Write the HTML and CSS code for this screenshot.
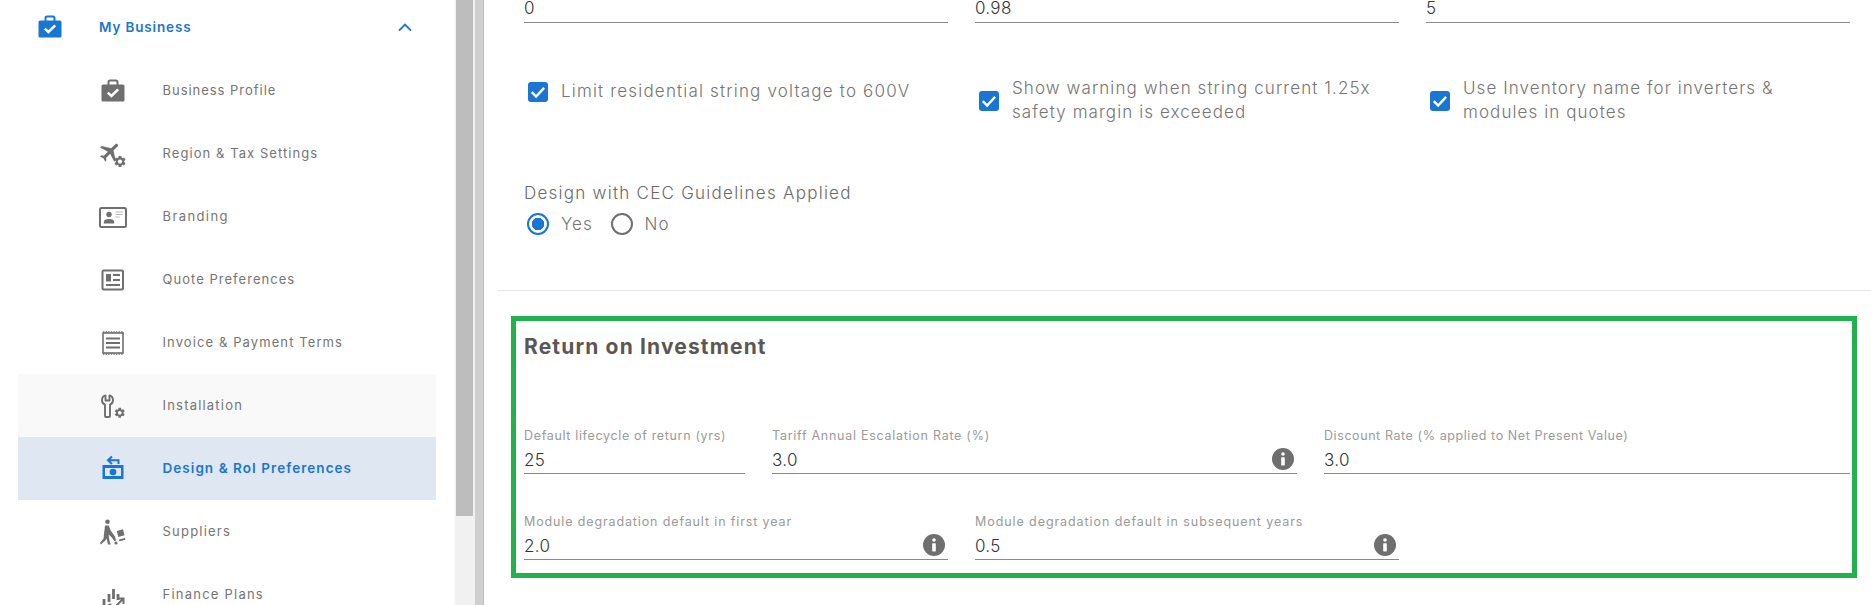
FILE: index.html
```html
<!DOCTYPE html>
<html lang="en">
<head>
<meta charset="utf-8">
<title>Design &amp; RoI Preferences</title>
<link rel="stylesheet" href="styles.css">
</head>
<body>
<svg class="defs" width="0" height="0" aria-hidden="true">
  <defs>
    <symbol id="gear" viewBox="0 0 24 24"><path d="M19.14 12.94c.04-.3.06-.61.06-.94 0-.32-.02-.64-.07-.94l2.03-1.58c.18-.14.23-.41.12-.61l-1.92-3.32c-.12-.22-.37-.29-.59-.22l-2.39.96c-.5-.38-1.03-.7-1.62-.94l-.36-2.54c-.04-.24-.24-.41-.48-.41h-3.84c-.24 0-.43.17-.47.41l-.36 2.54c-.59.24-1.13.57-1.62.94l-2.39-.96c-.22-.08-.47 0-.59.22L2.74 8.87c-.12.21-.08.47.12.61l2.03 1.58c-.05.3-.09.63-.09.94s.02.64.07.94l-2.03 1.58c-.18.14-.23.41-.12.61l1.92 3.32c.12.22.37.29.59.22l2.39-.96c.5.38 1.03.7 1.62.94l.36 2.54c.05.24.24.41.48.41h3.84c.24 0 .44-.17.47-.41l.36-2.54c.59-.24 1.13-.56 1.62-.94l2.39.96c.22.08.47 0 .59-.22l1.92-3.32c.12-.22.07-.47-.12-.61l-2.01-1.58zM12 15.6c-1.98 0-3.6-1.62-3.6-3.6s1.62-3.6 3.6-3.6 3.6 1.62 3.6 3.6-1.62 3.6-3.6 3.6z"/></symbol>
    <symbol id="case" viewBox="0 0 30 30">
      <path d="M10.500 9V6q0-1.600 1.600-1.600h5.800q1.600 0 1.600 1.600v3" fill="none" stroke="currentColor" stroke-width="2"/>
      <rect x="3.500" y="8.500" width="23" height="17" rx="1.600" fill="currentColor"/>
      <path d="M9.800 16.600l3.600 3.400 6.800-6.600" fill="none" stroke="#fff" stroke-width="2.500"/>
    </symbol>
    <symbol id="info" viewBox="0 0 22 22">
      <circle cx="11" cy="11" r="11" fill="#6f6f6f"/>
      <circle cx="11" cy="6" r="1.800" fill="#fff"/>
      <rect x="9.200" y="9.200" width="3.600" height="8.200" rx=".6" fill="#fff"/>
    </symbol>
    <symbol id="tick" viewBox="0 0 20 20">
      <rect width="20" height="20" rx="3" fill="#1976d2"/>
      <path d="M3.800 10.200l4.300 4.300 8-8.600" fill="none" stroke="#fff" stroke-width="2.400"/>
    </symbol>
  </defs>
</svg>

<aside class="sidebar">
  <nav>
    <div class="nav-head">
      <svg class="nav-head-icon" width="30" height="30"><use href="#case"/></svg>
      <span class="nav-head-text">My Business</span>
      <svg class="chevron" width="14" height="9" viewBox="0 0 14 9"><path d="M1 7.600l6-6 6 6" fill="none" stroke="#1976d2" stroke-width="2"/></svg>
    </div>

    <div class="nav-item">
      <svg class="nav-icon" width="30" height="30"><use href="#case"/></svg>
      <span class="ls-a">Business Profile</span>
    </div>

    <div class="nav-item">
      <svg class="nav-icon" width="30" height="30" viewBox="0 0 30 30">
        <g transform="translate(12.500 13) rotate(45) scale(1.050) translate(-12 -12)"><path fill="currentColor" d="M21 16v-2l-8-5V3.500c0-.83-.67-1.500-1.500-1.500S10 2.670 10 3.500V9l-8 5v2l8-2.500V19l-2 1.500V22l3.500-1 3.500 1v-1.500L13 19v-5.500l8 2.500z"/></g>
        <use href="#gear" x="15" y="15.500" width="14" height="14" fill="currentColor"/>
      </svg>
      <span class="ls-b">Region &amp; Tax Settings</span>
    </div>

    <div class="nav-item">
      <svg class="nav-icon" width="30" height="30" viewBox="0 0 30 30">
        <rect x="2" y="6" width="26" height="19" rx="1.500" fill="none" stroke="currentColor" stroke-width="2"/>
        <circle cx="11" cy="12.500" r="2.700" fill="currentColor"/>
        <path d="M5.800 21.500v-1.600q0-2.900 5.200-2.900t5.200 2.900v1.600z" fill="currentColor"/>
        <path d="M17.500 10h7M17.500 12.500h7M17.500 15h4" stroke="#b9b9b9" stroke-width="1.200"/>
      </svg>
      <span class="ls-c">Branding</span>
    </div>

    <div class="nav-item">
      <svg class="nav-icon" width="30" height="30" viewBox="0 0 30 30">
        <rect x="4.500" y="5.500" width="20.500" height="19" rx="1" fill="none" stroke="currentColor" stroke-width="2"/>
        <rect x="8" y="9" width="5" height="7.500" fill="currentColor"/>
        <path d="M15 10h7M15 15h7M8 20h14" stroke="currentColor" stroke-width="2"/>
      </svg>
      <span class="ls-d">Quote Preferences</span>
    </div>

    <div class="nav-item">
      <svg class="nav-icon" width="30" height="30" viewBox="0 0 30 30">
        <rect x="5" y="5" width="20" height="20" fill="none" stroke="currentColor" stroke-width="1.600"/>
        <path d="M5 4h20M5 26h20" stroke="currentColor" stroke-width="1.400" stroke-dasharray="1.400 1.200"/>
        <path d="M8 10.500h14M8 15h14M8 19.500h14" stroke="currentColor" stroke-width="2"/>
      </svg>
      <span class="ls-e">Invoice &amp; Payment Terms</span>
    </div>

    <div class="nav-item nav-hover">
      <svg class="nav-icon" width="30" height="30" viewBox="0 0 30 30">
        <path d="M7.500 4.400C5.400 5 4 7 4 9.200c0 2.200 1.300 3.700 3 4.500V25q0 1 1 1h3q1 0 1-1V13.700c1.700-.8 3-2.300 3-4.500 0-2.200-1.400-4.200-3.500-4.800v5.100H7.500z" fill="none" stroke="currentColor" stroke-width="1.900" stroke-linejoin="round"/>
        <use href="#gear" x="15.500" y="15.500" width="12.500" height="12.500" fill="currentColor"/>
      </svg>
      <span class="ls-f">Installation</span>
    </div>

    <div class="nav-item nav-active">
      <svg class="nav-icon" width="30" height="30" viewBox="0 0 30 30">
        <path d="M20.500 10V6.200H10M14 2.500L10 6.200l4 3.700" fill="none" stroke="currentColor" stroke-width="2"/>
        <path fill-rule="evenodd" d="M4.500 11h21v14h-21zM7 14v8h16v-8z" fill="currentColor"/>
        <ellipse cx="15" cy="18" rx="3.400" ry="3.200" fill="currentColor"/>
      </svg>
      <span class="ls-g">Design &amp; RoI Preferences</span>
    </div>

    <div class="nav-item">
      <svg class="nav-icon" width="30" height="30" viewBox="0 0 30 30">
        <circle cx="9.500" cy="4.700" r="2.300" fill="currentColor"/>
        <path d="M7 8.500h3.700l2 5 4.300 6 1 4-1.600.8-2.400-3.500-3.300-3.300.5 5.300 1.400 4.700H10l-1.500-6-1 1.700-4.700 4.300L2 26l3.500-4.500z" fill="currentColor"/>
        <circle cx="18" cy="26" r="1.600" fill="currentColor"/>
        <path d="M18.800 14l6.200-1.700 1.500 6-6.200 1.700zM21 22.600l6-1.500.4 1.700-6 1.500z" fill="currentColor"/>
      </svg>
      <span class="ls-h">Suppliers</span>
    </div>

    <div class="nav-item">
      <svg class="nav-icon" width="30" height="30" viewBox="0 0 30 30">
        <path d="M6 19v7.500M11 14v8M15.500 9v10M20 14v6" stroke="currentColor" stroke-width="2.800"/>
        <path d="M5 29l7-4.500 4 3.500 8.500-8.500M20 18.500h5.500V24" fill="none" stroke="currentColor" stroke-width="2"/>
      </svg>
      <span class="ls-i">Finance Plans</span>
    </div>
  </nav>
</aside>

<div class="scroll-a"><div class="scroll-a-thumb"></div></div>
<div class="scroll-b"></div>

<main class="main">
  <div class="grid-3 top-inputs">
    <div class="value-row"><span class="value">0</span></div>
    <div class="value-row"><span class="value">0.98</span></div>
    <div class="value-row"><span class="value">5</span></div>
  </div>

  <div class="grid-3 checks">
    <label class="check check-single">
      <svg class="tick" width="20" height="20"><use href="#tick"/></svg>
      <span>Limit residential string voltage to 600V</span>
    </label>
    <label class="check">
      <svg class="tick" width="20" height="20"><use href="#tick"/></svg>
      <span>Show warning when string current 1.25x<br>safety margin is exceeded</span>
    </label>
    <label class="check">
      <svg class="tick" width="20" height="20"><use href="#tick"/></svg>
      <span>Use Inventory name for inverters &amp;<br>modules in quotes</span>
    </label>
  </div>

  <div class="cec-label">Design with CEC Guidelines Applied</div>
  <div class="radios">
    <span class="radio radio-on"></span><span class="radio-text radio-text-yes">Yes</span>
    <span class="radio radio-off"></span><span class="radio-text">No</span>
  </div>

  <hr class="divider">

  <section class="roi">
    <h2 class="roi-title">Return on Investment</h2>
    <div class="roi-row-1">
      <div class="field">
        <div class="field-label ls-l1">Default lifecycle of return (yrs)</div>
        <div class="value-row"><span class="value">25</span></div>
      </div>
      <div class="field">
        <div class="field-label ls-l2">Tariff Annual Escalation Rate (%)</div>
        <div class="value-row"><span class="value">3.0</span><svg class="info" width="22" height="22"><use href="#info"/></svg></div>
      </div>
      <div class="field">
        <div class="field-label ls-l3">Discount Rate (% applied to Net Present Value)</div>
        <div class="value-row"><span class="value">3.0</span></div>
      </div>
    </div>
    <div class="roi-row-2">
      <div class="field">
        <div class="field-label ls-l4">Module degradation default in first year</div>
        <div class="value-row"><span class="value">2.0</span><svg class="info" width="22" height="22"><use href="#info"/></svg></div>
      </div>
      <div class="field">
        <div class="field-label ls-l5">Module degradation default in subsequent years</div>
        <div class="value-row"><span class="value">0.5</span><svg class="info" width="22" height="22"><use href="#info"/></svg></div>
      </div>
    </div>
  </section>
</main>
</body>
</html>
```

FILE: styles.css
```css
* { box-sizing: border-box; }
html, body { height: 605px; margin: 0; overflow: hidden; background: #fff; }
body {
  display: flex;
  font-family: Inter, "Noto Sans", "Liberation Sans", sans-serif;
  color: #757575;
}
.defs { position: absolute; }

/* Sidebar */
.sidebar { width: 454px; flex: none; padding-left: 18px; overflow: hidden; }
nav { width: 418px; }
.nav-head { height: 54px; margin-bottom: 5px; display: flex; align-items: center; color: #1976d2; }
.nav-head-icon { margin-left: 16.5px; flex: none; }
.nav-head-text { margin-left: 34.5px; font-size: 13.5px; font-weight: 600; letter-spacing: .85px; }
.chevron { margin-left: auto; margin-right: 24px; }
.nav-item { height: 63px; display: flex; align-items: center; font-size: 13px; color: #757575; font-weight: 400; }
.nav-item span { margin-top: -1px; }
.nav-icon { margin-left: 79.5px; flex: none; margin-right: 35px; color: #6f6f6f; }
.nav-hover { background: #f9f9f9; }
.nav-active { background: #dee7f2; color: #1976d2; font-weight: 600; font-size: 13.5px; }
.nav-active .nav-icon { color: #1976d2; }

.ls-a { letter-spacing: .97px; }
.ls-b { letter-spacing: 1.07px; }
.ls-c { letter-spacing: 1.4px; }
.ls-d { letter-spacing: 1.03px; }
.ls-e { letter-spacing: 1.1px; }
.ls-f { letter-spacing: 1.2px; }
.ls-g { letter-spacing: 1.05px; }
.ls-h { letter-spacing: 1.22px; }
.ls-i { letter-spacing: 1.23px; }

/* Scrollbars */
.scroll-a { width: 21px; flex: none; background: #f1f1f1; border-left: 2px solid #f6f6f6; padding-right: 2px; }
.scroll-a-thumb { height: 516px; background: #bdbdbd; }
.scroll-b { width: 9px; flex: none; background: #cfcfcf; border-right: 1px solid #bdbdbd; }

/* Main */
.main { flex: 1; padding: 0 21px 0 40px; min-width: 0; font-size: 17px; font-weight: 300; letter-spacing: 1.08px; }
.grid-3 { display: grid; grid-template-columns: repeat(3, 1fr); column-gap: 27px; }
.value-row { height: 25px; display: flex; align-items: center; justify-content: space-between; border-bottom: 1px solid #8a8a8a; padding-bottom: 2px; }
.value { font-size: 17px; font-weight: 300; color: #333; letter-spacing: .3px; }
.info { flex: none; margin-right: 3px; margin-top: -1px; }
.top-inputs { margin-top: -2px; }
.top-inputs .value-row { padding-bottom: 4px; }

.checks { margin-top: 54px; }
.check { display: flex; align-items: center; gap: 13px; padding-left: 4px; line-height: 23.5px; min-height: 47px; }
.check-single { min-height: 30px; align-self: start; letter-spacing: 1.18px; }
.tick { flex: none; }

.cec-label { margin-top: 58px; line-height: 23px; letter-spacing: 1.25px; color: #6a6a6a; }
.radios { display: flex; align-items: center; height: 24px; margin-top: 7px; padding-left: 3px; }
.radio { width: 22px; height: 22px; border-radius: 50%; flex: none; }
.radio-on { border: 2.2px solid #1976d2; background: radial-gradient(circle, #1976d2 0 6px, #fff 6.5px); }
.radio-off { border: 2.2px solid #6f6f6f; }
.radio-text { margin-left: 12px; }
.radio-text-yes { width: 49.5px; }

.divider { height: 1px; border: 0; background: #e6e6e6; margin: 54px -21px 0 -27px; }

/* Return on investment */
.roi { margin: 25px -7px 0 -13px; height: 262px; border: 5px solid #22b14c; padding: 14px 2px 0 8px; letter-spacing: normal; }
.roi-title { margin: 0; font-size: 21px; line-height: 24px; font-weight: 700; color: #5b5754; letter-spacing: 1.15px; }
.roi-row-1 { display: grid; grid-template-columns: 221px 525px 1fr; column-gap: 27px; margin-top: 69px; }
.roi-row-2 { display: grid; grid-template-columns: 424px 424px 1fr; column-gap: 27px; margin-top: 40px; }
.field { height: 46px; }
.field-label { font-size: 12.5px; font-weight: 400; line-height: 16px; height: 20px; color: #9a9a9a; }
.field .value-row { height: 26px; }

.ls-l1 { letter-spacing: .66px; }
.ls-l2 { letter-spacing: .73px; }
.ls-l3 { letter-spacing: .58px; }
.ls-l4 { letter-spacing: .87px; }
.ls-l5 { letter-spacing: .92px; }
```
